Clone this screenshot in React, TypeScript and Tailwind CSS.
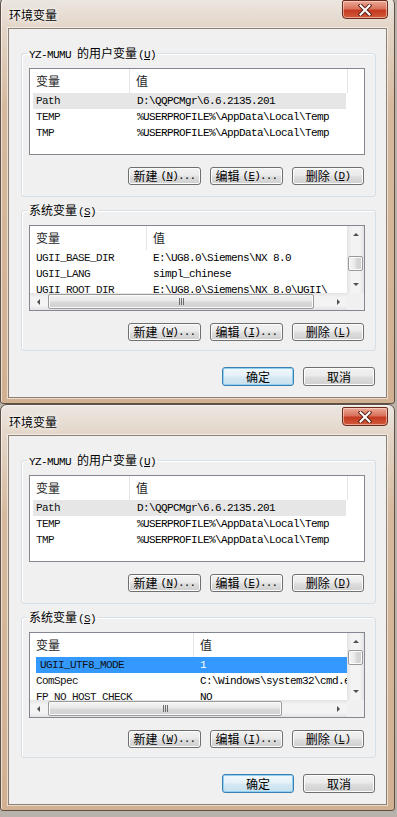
import React from "react";

const CJK = "font-['Noto_Sans_CJK_SC',sans-serif]";
const MONO = "font-['Liberation_Mono','Noto_Sans_CJK_SC',monospace]";

function Arrow({ dir }: { dir: "up" | "down" | "left" | "right" }) {
  const pts: Record<string, string> = {
    up: "1,5 4,2 7,5",
    down: "1,2 4,5 7,2",
    left: "5,1 2,4 5,7",
    right: "2,1 5,4 2,7",
  };
  return (
    <svg width="8" height="8" viewBox="0 0 8 8">
      <polygon points={pts[dir]} fill="#4f4f4f" />
    </svg>
  );
}

function Grip() {
  return (
    <div className="flex gap-[1px]">
      <div className="w-[1px] h-[7px] bg-[#6b6b6b]" />
      <div className="w-[1px] h-[7px] bg-[#6b6b6b]" />
      <div className="w-[1px] h-[7px] bg-[#6b6b6b]" />
    </div>
  );
}

function VScroll({ thumb }: { thumb: string }) {
  return (
    <div className="w-[17px] shrink-0 flex flex-col bg-[linear-gradient(90deg,#e3e3e3,#f3f3f3_25%,#f3f3f3_75%,#e3e3e3)]">
      <div className="h-[17px] flex items-center justify-center">
        <Arrow dir="up" />
      </div>
      <div className="flex-1 flex flex-col">
        <div
          className={`${thumb} h-[15px] mx-[1px] rounded-[2px] border border-[#9a9a9a] bg-[linear-gradient(90deg,#f4f4f4,#e9e9e9_45%,#d9d9d9_55%,#cfcfcf)] shadow-[inset_0_0_0_1px_#fbfbfb]`}
        />
      </div>
      <div className="h-[17px] flex items-center justify-center">
        <Arrow dir="down" />
      </div>
    </div>
  );
}

function HScroll({ thumbW }: { thumbW: string }) {
  return (
    <div className="h-[17px] flex-1 min-w-0 flex bg-[linear-gradient(180deg,#e3e3e3,#f3f3f3_25%,#f3f3f3_75%,#e3e3e3)]">
      <div className="w-[17px] shrink-0 flex items-center justify-center">
        <Arrow dir="left" />
      </div>
      <div className="flex-1 flex items-stretch py-[1px]">
        <div
          className={`${thumbW} ml-[1px] flex items-center justify-center rounded-[2px] border border-[#9a9a9a] bg-[linear-gradient(180deg,#f4f4f4,#e9e9e9_45%,#d9d9d9_55%,#cfcfcf)] shadow-[inset_0_0_0_1px_#fbfbfb]`}
        >
          <Grip />
        </div>
      </div>
      <div className="w-[17px] shrink-0 flex items-center justify-center">
        <Arrow dir="right" />
      </div>
    </div>
  );
}

type Row = [string, string];

function HeaderCell({ w, label }: { w: string; label: string }) {
  return (
    <div className={`${w} h-full shrink-0 flex items-center pl-[6px] border-r border-[#e5e5e5] ${CJK} text-[12px] text-[#1e1e1e]`}>
      {label}
    </div>
  );
}

function Rows({ rows, c1, sel, selBlue }: { rows: Row[]; c1: string; sel?: number; selBlue?: boolean }) {
  return (
    <div className="flex flex-col">
      {rows.map((r, i) => {
        const isSel = sel === i;
        return (
          <div key={i} className="h-[16px] flex items-center">
            <div
              className={`flex-1 min-w-0 h-full flex items-center ${
                isSel ? (selBlue ? "ml-[6px] bg-[#3399ff] text-white" : "ml-[3px] mr-[1px] bg-[#e6e6e6]") : ""
              }`}
            >
              <div
                className={`${c1} shrink-0 whitespace-nowrap overflow-hidden ${
                  isSel ? (selBlue ? "-ml-[6px] pl-[10px]" : "-ml-[3px] pl-[6px]") : "pl-[6px]"
                } ${MONO} text-[11px] tracking-[-0.6px] leading-[16px] text-[#111]`}
              >
                {r[0]}
              </div>
              <div className={`flex-1 min-w-0 whitespace-nowrap overflow-hidden pl-[7px] ${MONO} text-[11px] tracking-[-0.6px] leading-[16px]`}>
                {r[1]}
              </div>
            </div>
          </div>
        );
      })}
    </div>
  );
}

function UserList() {
  const rows: Row[] = [
    ["Path", "D:\\QQPCMgr\\6.6.2135.201"],
    ["TEMP", "%USERPROFILE%\\AppData\\Local\\Temp"],
    ["TMP", "%USERPROFILE%\\AppData\\Local\\Temp"],
  ];
  return (
    <div className="h-[87px] border border-[#828790] bg-white flex flex-col overflow-hidden">
      <div className="h-[24px] flex shrink-0">
        <HeaderCell w="w-[100px]" label="变量" />
        <HeaderCell w="w-[218px]" label="值" />
        <div className="flex-1" />
      </div>
      <div className="w-[317px]">
        <Rows rows={rows} c1="w-[100px]" sel={0} />
      </div>
    </div>
  );
}

function SysList({ variant }: { variant: "a" | "b" }) {
  const rowsA: Row[] = [
    ["UGII_BASE_DIR", "E:\\UG8.0\\Siemens\\NX 8.0"],
    ["UGII_LANG", "simpl_chinese"],
    ["UGII_ROOT_DIR", "E:\\UG8.0\\Siemens\\NX 8.0\\UGII\\"],
  ];
  const rowsB: Row[] = [
    ["UGII_UTF8_MODE", "1"],
    ["ComSpec", "C:\\Windows\\system32\\cmd.exe"],
    ["FP_NO_HOST_CHECK", "NO"],
  ];
  const a = variant === "a";
  return (
    <div className="h-[86px] border border-[#828790] bg-white flex flex-col overflow-hidden">
      <div className="flex-1 flex min-h-0">
        <div className="flex-1 min-w-0 flex flex-col overflow-hidden">
          <div className="h-[24px] flex shrink-0">
            {a ? (
              <>
                <HeaderCell w="w-[117px]" label="变量" />
                <HeaderCell w="w-[201px]" label="值" />
              </>
            ) : (
              <>
                <HeaderCell w="w-[164px]" label="变量" />
                <HeaderCell w="w-[160px]" label="值" />
              </>
            )}
          </div>
          {a ? (
            <Rows rows={rowsA} c1="w-[116px]" />
          ) : (
            <Rows rows={rowsB} c1="w-[163px]" sel={0} selBlue />
          )}
        </div>
        <VScroll thumb={a ? "mt-[13px]" : "mt-0"} />
      </div>
      <div className="flex shrink-0">
        <HScroll thumbW={a ? "w-[266px]" : "w-[234px]"} />
        <div className="w-[17px] h-[17px] shrink-0 bg-[#f0f0f0]" />
      </div>
    </div>
  );
}

function Btn({ children, w, def }: { children: React.ReactNode; w: string; def?: boolean }) {
  return (
    <div
      className={`${w} shrink-0 flex items-center justify-center rounded-[3px] border ${
        def
          ? "border-[#3c7fb1] bg-[linear-gradient(180deg,#f1f8fc,#e5f1f8_45%,#d5e8f3_55%,#c8e0ee)] shadow-[inset_0_0_0_1px_#8fd0f0]"
          : "border-[#707070] bg-[linear-gradient(180deg,#f2f2f2,#ebebeb_45%,#dddddd_55%,#cfcfcf)] shadow-[inset_0_0_0_1px_#fcfcfc]"
      } text-[12px] leading-none text-black`}
    >
      {children}
    </div>
  );
}

function BtnLabel({ cn, k, dots }: { cn: string; k?: string; dots?: boolean }) {
  return (
    <span className="flex items-center whitespace-nowrap">
      <span className={`${CJK} text-[12px] leading-none`}>{cn}</span>
      {k && (
        <span className={`${MONO} text-[11px] tracking-[-0.8px] leading-none ml-[3px]`}>
          (<span className="underline">{k}</span>){dots ? "..." : ""}
        </span>
      )}
    </span>
  );
}

function ButtonsRow({ keys, mt }: { keys: [string, string, string]; mt: string }) {
  return (
    <div className={`${mt} h-[18px] flex justify-end gap-[9px] pr-[1px]`}>
      <Btn w="w-[73px]">
        <BtnLabel cn="新建" k={keys[0]} dots />
      </Btn>
      <Btn w="w-[73px]">
        <BtnLabel cn="编辑" k={keys[1]} dots />
      </Btn>
      <Btn w="w-[72px]">
        <BtnLabel cn="删除" k={keys[2]} />
      </Btn>
    </div>
  );
}

function Legend({ children }: { children: React.ReactNode }) {
  return (
    <legend className={`ml-[-2px] px-[2px] h-[16px] leading-[16px] text-[12px] text-black whitespace-nowrap ${CJK}`}>{children}</legend>
  );
}

function CloseBtn() {
  return (
    <div className="w-[46px] h-[19px] rounded-b-[4px] rounded-t-[2px] border border-[#6b2a1c] bg-[linear-gradient(180deg,#eba896,#d9735c_45%,#c43b22_55%,#d25a3a)] shadow-[inset_0_0_0_1px_rgba(255,230,220,0.55)] flex items-center justify-center">
      <svg width="14" height="12" viewBox="0 0 14 12">
        <path d="M2.5 1.5 L11.5 10.5 M11.5 1.5 L2.5 10.5" stroke="#5a2418" strokeWidth="4" strokeLinecap="square" />
        <path d="M2.5 1.5 L11.5 10.5 M11.5 1.5 L2.5 10.5" stroke="#ffffff" strokeWidth="2" strokeLinecap="square" />
      </svg>
    </div>
  );
}

function Dialog({ variant }: { variant: "a" | "b" }) {
  return (
    <div className="w-[395px] h-[407px] shrink-0 rounded-t-[7px] rounded-b-[3px] border border-[#5e5045] bg-[linear-gradient(180deg,#ece7e2_0px,#e3d5c7_30px,#d6b99d_110px,#d2b192_100%)] shadow-[inset_1px_1px_0_rgba(255,255,255,0.6)] flex flex-col">
      <div className="h-[30px] shrink-0 flex items-start justify-between">
        <span className={`ml-[8px] mt-[9px] text-[12px] leading-[16px] text-black ${CJK} [text-shadow:0_0_6px_#ffffff,0_0_3px_#ffffff]`}>
          环境变量
        </span>
        <div className="mt-[2px] mr-[6px]">
          <CloseBtn />
        </div>
      </div>
      <div className="mx-[7px] h-[370px] shrink-0 border border-[#8e8174] bg-[#f0f0f0] flex flex-col pt-[16px] pl-[12px] pr-[10px] pb-[11px] shadow-[0_0_0_1px_rgba(255,255,255,0.55)]">
        <fieldset className="min-w-0 border border-[#d5dfe5] rounded-[3px] pt-[7px] pl-[7px] pr-[10px] pb-[11px] shadow-[inset_1px_1px_0_#ffffff]">
          <Legend>
            <span className={`${MONO} text-[11px] tracking-[-0.6px]`}>YZ-MUMU </span>
            的用户变量
            <span className={`${MONO} text-[11px] tracking-[-0.6px] ml-[1px]`}>
              (<span className="underline">U</span>)
            </span>
          </Legend>
          <UserList />
          <ButtonsRow keys={["N", "E", "D"]} mt="mt-[12px]" />
        </fieldset>
        <fieldset className="min-w-0 mt-[5px] border border-[#d5dfe5] rounded-[3px] pt-[7px] pl-[7px] pr-[10px] pb-[9px] shadow-[inset_1px_1px_0_#ffffff]">
          <Legend>
            系统变量
            <span className={`${MONO} text-[11px] tracking-[-0.6px] ml-[1px]`}>
              (<span className="underline">S</span>)
            </span>
          </Legend>
          <SysList variant={variant} />
          <ButtonsRow keys={["W", "I", "L"]} mt="mt-[12px]" />
        </fieldset>
        <div className="mt-[16px] h-[19px] flex justify-end gap-[9px] pr-[1px]">
          <Btn w="w-[72px]" def>
            <BtnLabel cn="确定" />
          </Btn>
          <Btn w="w-[72px]">
            <BtnLabel cn="取消" />
          </Btn>
        </div>
      </div>
    </div>
  );
}

export default function App() {
  return (
    <div className="w-[397px] h-[817px] overflow-hidden bg-[#b9b2aa] flex flex-col">
      <div className="mt-[-3px]">
        <Dialog variant="a" />
      </div>
      <Dialog variant="b" />
    </div>
  );
}
